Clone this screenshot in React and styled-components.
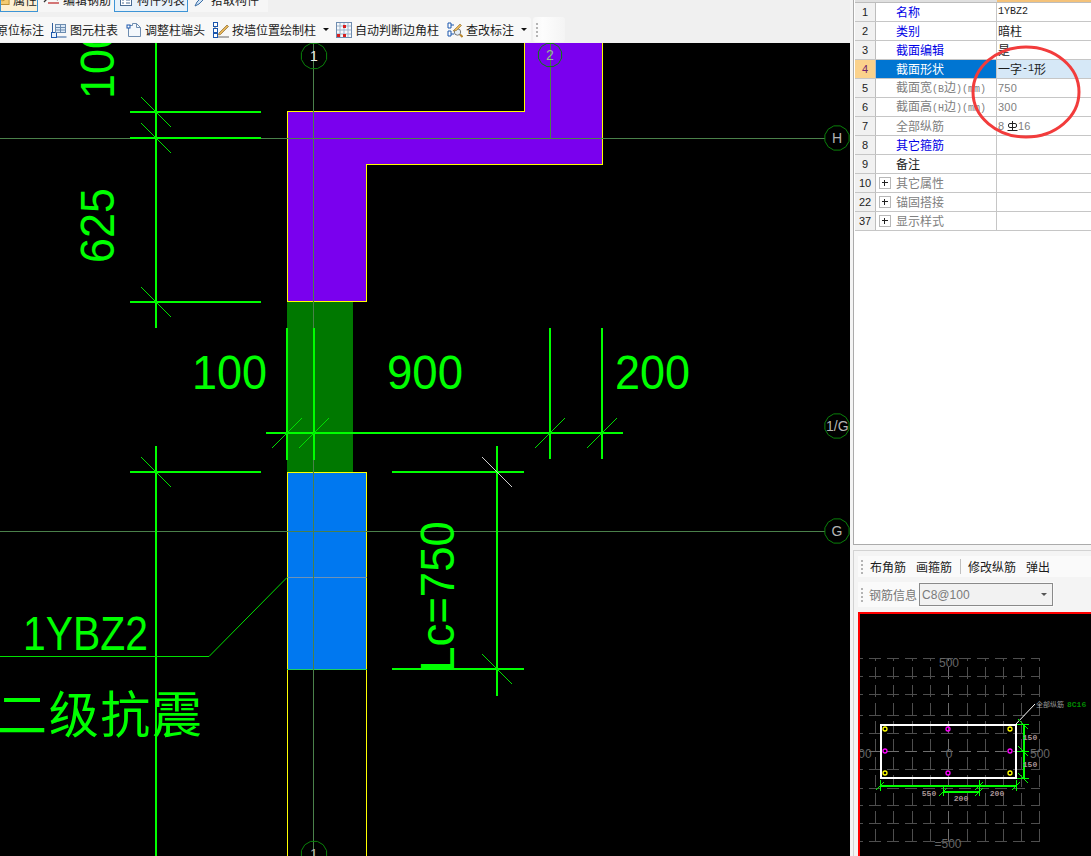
import React from 'react';
import styled, { createGlobalStyle } from 'styled-components';

const UI_FONT = '"Noto Sans CJK SC", "Liberation Sans", sans-serif';
const LATIN_FONT = '"Liberation Mono", "Noto Sans CJK SC", monospace';
const SANS_FONT = '"Liberation Sans", "Noto Sans CJK SC", sans-serif';

const GlobalStyle = createGlobalStyle`
  html, body { margin: 0; padding: 0; background: #f0f0f0; }
  body { font-family: ${UI_FONT}; font-size: 12px; color: #1c1c1c; }
`;

const Page = styled.div`
  display: grid;
  grid-template-columns: 850px 241px;
  width: 1091px;
  height: 856px;
  overflow: hidden;
`;

// Left side
const LeftColumn = styled.div`
  display: flex;
  flex-direction: column;
  min-width: 0;
`;
const TabBar = styled.div`
  display: flex;
  align-items: flex-end;
  flex: none;
  width: 268px;
  height: 12px;
  overflow: hidden;
  background: #f6f6f6;
`;
const TabButton = styled.div`
  display: flex;
  align-items: center;
  flex: none;
  box-sizing: border-box;
  height: 24px;
  width: ${p => p.$w}px;
  margin-right: ${p => p.$gap || 0}px;
  padding-left: ${p => p.$pad || 0}px;
  gap: ${p => p.$iconGap || 3}px;
  line-height: 14px;
  white-space: nowrap;
  border: 1px solid ${p => (p.$active ? '#3d94d6' : 'transparent')};
  background: ${p => p.$fill || 'transparent'};
`;
const ToolRow = styled.div`
  display: flex;
  flex: none;
  gap: 2px;
  height: 25px;
  margin-top: 5px;
  margin-bottom: 1px;
`;
const ToolStrip = styled.div`
  display: flex;
  align-items: center;
  flex: none;
  width: 531px;
  overflow: hidden;
  background: #f8f8f8;
  border-radius: 0 3px 3px 0;
`;
const ToolItem = styled.div`
  display: flex;
  align-items: center;
  flex: none;
  gap: 3px;
  margin-left: ${p => p.$ml}px;
  white-space: nowrap;
  line-height: 14px;
`;
const ToolArrow = styled.span`
  flex: none;
  width: 0;
  height: 0;
  margin-left: 4px;
  border-left: 3px solid transparent;
  border-right: 3px solid transparent;
  border-top: 3px solid #111;
`;
const GripStrip = styled.div`
  display: flex;
  align-items: center;
  flex: none;
  width: 32px;
  padding-left: 3px;
  box-sizing: border-box;
  border-radius: 3px;
  background: linear-gradient(to right, #f7f7f7, #fdfdfd 30%, #f4f4f4);
`;
const Grip = styled.div`
  flex: none;
  width: 2px;
  height: ${p => p.$h || 14}px;
  background: repeating-linear-gradient(to bottom, #b4b4b4 0 2px, transparent 2px 4px);
`;
const CanvasWrap = styled.div`
  flex: 1;
  min-height: 0;
  background: #000;
`;
const CadSvg = styled.svg`
  display: block;
  width: 850px;
  height: 813px;
`;
const DimLine = styled.line`
  stroke: #00ff00;
  stroke-width: 2;
  shape-rendering: crispEdges;
`;
const Slash = styled.line`
  stroke: ${p => p.$c || '#00e000'};
  stroke-width: 1;
`;
const AxisLine = styled.line`
  stroke: #4a804a;
  stroke-width: 1;
  shape-rendering: crispEdges;
`;
const Outline = styled.line`
  stroke: ${p => p.$c || '#ffff00'};
  stroke-width: 1;
  shape-rendering: crispEdges;
`;
const CadText = styled.text`
  fill: #00ff00;
  font-family: "Liberation Sans", sans-serif;
  font-size: 48px;
`;
const CadCjk = styled.text`
  fill: #00ff00;
  font-family: "Noto Sans CJK SC", sans-serif;
  font-weight: 400;
  font-size: 50px;
`;
const BubbleShape = styled.polygon`
  fill: none;
  stroke: #0a800a;
  stroke-width: 1;
`;
const BubbleText = styled.text`
  fill: ${p => p.$c || '#b4b4b4'};
  font-family: "Liberation Sans", sans-serif;
  font-size: ${p => p.$s || 14}px;
  text-anchor: ${p => p.$a || 'middle'};
`;

// Right side
const RightColumn = styled.div`
  display: flex;
  flex-direction: column;
  padding-left: 3px;
  min-width: 0;
  background: #f4f4f4;
`;
const PropertyPanel = styled.div`
  position: relative;
  flex: none;
  box-sizing: border-box;
  height: 545px;
  padding: 0 0 0 1px;
  background: #fff;
  border-left: 1px solid #ababab;
  border-bottom: 1px solid #ababab;
`;
const HeaderRow = styled.div`
  display: grid;
  grid-template-columns: 21px 121px 1fr;
  height: 2px;
  background: #e0e0e0;
  border-bottom: 1px solid #bdbdbd;
`;
const HeaderCell = styled.div`
  background: ${p => (p.$on ? '#f4c27a' : 'transparent')};
`;
const PropRow = styled.div`
  display: grid;
  grid-template-columns: 21px 121px 1fr;
  box-sizing: border-box;
  height: 19px;
  border-bottom: 1px solid #c6c6c6;
`;
const NumCell = styled.div`
  display: flex;
  align-items: center;
  justify-content: center;
  font-family: ${SANS_FONT};
  font-size: 11px;
  border-right: 1px solid #bdbdbd;
  background: ${p => (p.$sel ? '#fbd28c' : '#f1f1f1')};
  color: ${p => (p.$sel ? '#70256e' : '#222')};
`;
const NameCell = styled.div`
  display: flex;
  align-items: center;
  padding-left: ${p => (p.$group ? 3 : 20)}px;
  gap: 5px;
  line-height: 14px;
  white-space: nowrap;
  overflow: hidden;
  border-right: 1px solid #c6c6c6;
  background: ${p => (p.$sel ? '#0075d2' : '#fff')};
  color: ${p => (p.$sel ? '#fff' : p.$tone)};
`;
const ValueCell = styled.div`
  display: flex;
  align-items: center;
  padding-left: 1px;
  line-height: 14px;
  white-space: nowrap;
  overflow: hidden;
  background: ${p => (p.$sel ? '#d6e8f7' : '#fff')};
  color: ${p => p.$tone || '#1c1c1c'};
`;
const Latin = styled.span`
  font-family: ${LATIN_FONT};
  font-size: 10px;
`;
const Digits = styled.span`
  font-family: ${SANS_FONT};
  font-size: 11px;
  letter-spacing: 0.2px;
`;
const PlusBox = styled.span`
  position: relative;
  flex: none;
  box-sizing: border-box;
  width: 12px;
  height: 12px;
  border: 1px solid #b8b8b8;
  background: #fff;
  &::before, &::after {
    content: '';
    position: absolute;
    background: #222;
  }
  &::before { left: 2px; right: 2px; top: 4px; height: 1px; }
  &::after { top: 2px; bottom: 2px; left: 4px; width: 1px; }
`;
const RedCircle = styled.svg`
  position: absolute;
  left: 115px;
  top: 42px;
  width: 114px;
  height: 100px;
  overflow: visible;
  pointer-events: none;
`;
const LowerPanel = styled.div`
  display: flex;
  flex-direction: column;
  flex: 1;
  min-height: 0;
  margin-top: 5px;
  padding: 5px 0 0 4px;
  background: #f4f4f4;
  border-left: 1px solid #d2d2d2;
  border-top: 1px solid #d2d2d2;
`;
const MiniBar = styled.div`
  display: flex;
  align-items: center;
  flex: none;
  box-sizing: border-box;
  height: ${p => p.$h}px;
  width: ${p => p.$w}px;
  margin-bottom: ${p => p.$mb}px;
  padding-left: 3px;
  background: #fafafa;
`;
const MiniLabel = styled.span`
  margin-left: ${p => p.$ml}px;
  line-height: 14px;
  white-space: nowrap;
  color: ${p => p.$c || '#1c1c1c'};
`;
const MiniDivider = styled.span`
  width: 1px;
  height: 15px;
  margin-left: 8px;
  background: #c0c0c0;
`;
const ComboBox = styled.div`
  display: flex;
  align-items: center;
  justify-content: space-between;
  box-sizing: border-box;
  width: 134px;
  height: 23px;
  margin-left: 2px;
  padding: 0 5px 0 2px;
  font-family: "Liberation Sans", sans-serif;
  font-size: 12px;
  color: #7a7a7a;
  background: #f2f2f2;
  border: 1px solid #8a8a8a;
`;
const ComboArrow = styled.span`
  width: 0;
  height: 0;
  border-left: 3px solid transparent;
  border-right: 3px solid transparent;
  border-top: 3px solid #555;
`;
const Preview = styled.div`
  flex: 1;
  min-height: 0;
  background: #000;
  border-top: 2px solid #ff0000;
  border-left: 2px solid #ff0000;
`;
const PreviewSvg = styled.svg`
  display: block;
  width: 231px;
  height: 243px;
`;
const GridLine = styled.line`
  stroke: ${p => p.$c || '#4e4e4e'};
  stroke-width: 1;
  stroke-dasharray: 12 6;
  stroke-dashoffset: 9;
  shape-rendering: crispEdges;
`;
const SectionEdge = styled.line`
  stroke: ${p => p.$c || '#fff'};
  stroke-width: ${p => p.$w || 1};
  shape-rendering: ${p => (p.$smooth ? 'auto' : 'crispEdges')};
`;
const RebarDot = styled.circle`
  fill: none;
  stroke: ${p => p.$c};
  stroke-width: 1.3;
`;
const PreviewText = styled.text`
  fill: ${p => p.$c || '#666'};
  font-family: "Liberation Sans", sans-serif;
  font-size: ${p => p.$s || 12}px;
  text-anchor: ${p => p.$a || 'middle'};
`;
const PreviewSmall = styled.text`
  fill: ${p => p.$c || '#a89494'};
  font-family: ${p => (p.$cjk ? UI_FONT : LATIN_FONT)};
  font-size: ${p => p.$s || 8}px;
  font-weight: ${p => (p.$cjk ? 400 : 700)};
  text-anchor: ${p => p.$a || 'middle'};
`;

// Toolbar icons
const MailIcon = () => (
  <svg width="10" height="12" viewBox="0 0 10 12">
    <rect x="-4" y="2" width="13" height="9" fill="#f3cb72" stroke="#b98a2c" />
    <path d="M-4 3l6 4 7-4" fill="none" stroke="#b98a2c" />
  </svg>
);
const RebarIcon = () => (
  <svg width="17" height="12" viewBox="0 0 17 12">
    <path d="M1 8l4-4h6l4 2" fill="none" stroke="#333" strokeWidth="1.3" />
    <path d="M5 9h11" stroke="#c03030" strokeWidth="1.3" />
  </svg>
);
const ListIcon = () => (
  <svg width="12" height="14" viewBox="0 0 12 14">
    <rect x="0.5" y="1.5" width="11" height="11" fill="#fff" stroke="#4a6c94" />
    <path d="M2 4h2M6 4h4M2 7h2M6 7h4M2 10h2M6 10h4" stroke="#4a6c94" />
  </svg>
);
const PickIcon = () => (
  <svg width="14" height="14" viewBox="0 0 14 14">
    <path d="M1 13l2-4 7-7 2 2-7 7z" fill="#cfe2f5" stroke="#3c6ea5" />
  </svg>
);
const TableIcon = () => (
  <svg width="16" height="16" viewBox="0 0 16 16">
    <path d="M1.5 1v14h14" fill="none" stroke="#2f5f9e" />
    <rect x="0.5" y="10.5" width="5" height="5" fill="#e8f1fb" stroke="#1b56ad" />
    <rect x="4.5" y="2.5" width="10" height="8" fill="#dce9f7" stroke="#6c8cb0" />
    <path d="M5 5.5h9M5 8h9M9.500 3v7" stroke="#6c8cb0" />
  </svg>
);
const PageIcon = () => (
  <svg width="16" height="16" viewBox="0 0 16 16">
    <path d="M2.500 3.500h4v-2h4l4 4v9h-12z" fill="#f4f8fc" stroke="#6f8db0" />
    <path d="M10.500 1.500v4h4" fill="none" stroke="#6f8db0" />
    <rect x="1" y="3" width="3" height="3" fill="#fff" stroke="#1b56ad" />
  </svg>
);
const WallPencilIcon = () => (
  <svg width="16" height="16" viewBox="0 0 16 16">
    <path d="M2 1v14h14" fill="none" stroke="#666" />
    <rect x="0.5" y="0.5" width="4" height="4" fill="#fff" stroke="#1b56ad" />
    <rect x="0.5" y="6.5" width="4" height="4" fill="#fff" stroke="#1b56ad" />
    <rect x="0.500" y="11.5" width="4" height="4" fill="#fff" stroke="#1b56ad" />
    <path d="M6 11l8-8 1.500 1.500-8 8-2 .5z" fill="#e7b65a" stroke="#8b6a2c" strokeWidth="0.7" />
  </svg>
);
const GridDotsIcon = () => (
  <svg width="16" height="16" viewBox="0 0 16 16">
    <rect x="0.5" y="0.5" width="15" height="15" fill="#f6f9fc" stroke="#6f8db0" />
    <path d="M4 1v14M8 1v14M12 1v14M1 4h14M1 8h14M1 12h14" stroke="#9db3ca" />
    <rect x="7" y="3" width="3" height="3" fill="#d81e1e" />
    <rect x="1" y="12" width="3" height="3" fill="#d81e1e" />
    <rect x="7" y="12" width="3" height="3" fill="#d81e1e" />
  </svg>
);
const MarkFixIcon = () => (
  <svg width="16" height="16" viewBox="0 0 16 16">
    <path d="M1 1h3v5H1zM1 9h3v5H1zM4 3h3M4 12h3" fill="#fff" stroke="#1b56ad" />
    <circle cx="10.500" cy="10" r="3.200" fill="#e4eef8" stroke="#777" />
    <path d="M13 12.500l2.500 2.500" stroke="#b9852c" strokeWidth="2" />
    <path d="M6 9l7-7 1.500 1.500-5 5z" fill="#e7b65a" stroke="#8b6a2c" strokeWidth="0.6" />
  </svg>
);
const RebarGlyph = () => (
  <svg width="11" height="11" viewBox="0 0 11 11">
    <rect x="1.500" y="2.500" width="8" height="4" rx="1.500" fill="none" stroke="#222" />
    <path d="M5.500 0v10M0.500 9.500h10" stroke="#222" />
  </svg>
);

// Axis bubbles are drawn as the CAD program draws its circles, a 12 sided polygon
const bubblePoints = (cx, cy, r) =>
  Array.from({ length: 12 }, (_, i) => {
    const a = (i * Math.PI) / 6 + Math.PI / 12;
    return `${(cx + r * Math.cos(a)).toFixed(1)},${(cy + r * Math.sin(a)).toFixed(1)}`;
  }).join(' ');

const Bubble = ({ x, y, r = 12.5, label, color, textX, anchor }) => (
  <>
    <BubbleShape points={bubblePoints(x, y, r)} />
    <BubbleText x={textX || x} y={y + 5} $c={color} $a={anchor}>{label}</BubbleText>
  </>
);

// tick: a short thin slash across a dimension point, dir 1 goes "\" and -1 goes "/"
const Tick = ({ x, y, dir = 1, color }) => (
  <Slash x1={x - 15} y1={y - 15 * dir} x2={x + 15} y2={y + 15 * dir} $c={color} />
);

const CadDrawing = () => (
  <CadSvg viewBox="0 43 850 813">
    <polygon points="287,111 524,111 524,43 602,43 602,164 366,164 366,301 287,301" fill="#7a00ee" />
    <rect x="287" y="302" width="66" height="170" fill="#007800" />
    <rect x="287" y="472" width="79" height="197" fill="#0078f0" />

    <Outline x1="287.500" y1="111" x2="287.500" y2="301" />
    <Outline x1="287" y1="111.500" x2="524" y2="111.500" />
    <Outline x1="524.500" y1="43" x2="524.500" y2="112" />
    <Outline x1="602.500" y1="43" x2="602.500" y2="165" />
    <Outline x1="366" y1="164.500" x2="603" y2="164.500" />
    <Outline x1="366.500" y1="164" x2="366.500" y2="301" />
    <Outline x1="287" y1="301.500" x2="367" y2="301.500" />
    <Outline x1="287" y1="472.500" x2="367" y2="472.500" />
    <Outline x1="287.500" y1="472" x2="287.500" y2="856" />
    <Outline x1="366.500" y1="472" x2="366.500" y2="856" />
    <Outline x1="287" y1="669.500" x2="367" y2="669.500" $c="#20d060" />
    <Outline x1="287" y1="577.500" x2="367" y2="577.500" $c="#6f93b5" />

    <AxisLine x1="0" y1="138.500" x2="825" y2="138.500" />
    <AxisLine x1="0" y1="531.500" x2="825" y2="531.500" />
    <AxisLine x1="313.500" y1="43" x2="313.500" y2="856" />
    <AxisLine x1="550.500" y1="43" x2="550.500" y2="138" />

    <DimLine x1="156" y1="43" x2="156" y2="328" />
    <DimLine x1="130" y1="112" x2="261" y2="112" />
    <DimLine x1="130" y1="138" x2="261" y2="138" />
    <DimLine x1="130" y1="302" x2="261" y2="302" />
    <Tick x={156} y={112} />
    <Tick x={156} y={138} />
    <Tick x={156} y={302} />

    <DimLine x1="287" y1="328" x2="287" y2="460" />
    <DimLine x1="314" y1="328" x2="314" y2="460" />
    <DimLine x1="550" y1="328" x2="550" y2="459" />
    <DimLine x1="602" y1="328" x2="602" y2="459" />
    <DimLine x1="266" y1="433" x2="623" y2="433" />
    <Tick x={287} y={433} dir={-1} />
    <Tick x={314} y={433} dir={-1} />
    <Tick x={550} y={433} dir={-1} />
    <Tick x={602} y={433} dir={-1} />

    <DimLine x1="156" y1="446" x2="156" y2="856" />
    <DimLine x1="130" y1="472" x2="261" y2="472" />
    <Tick x={156} y={472} />

    <DimLine x1="497" y1="446" x2="497" y2="696" />
    <DimLine x1="392" y1="472" x2="524" y2="472" />
    <DimLine x1="392" y1="669" x2="524" y2="669" />
    <Tick x={497} y={472} color="#d0d0d0" />
    <Tick x={497} y={669} />

    <Slash x1="0" y1="656.500" x2="209" y2="656.500" />
    <Slash x1="209" y1="656.500" x2="287" y2="577.500" />

    <CadText x="192" y="389" textLength="75" lengthAdjust="spacingAndGlyphs">100</CadText>
    <CadText x="387" y="389" textLength="76" lengthAdjust="spacingAndGlyphs">900</CadText>
    <CadText x="615" y="389" textLength="75" lengthAdjust="spacingAndGlyphs">200</CadText>
    <CadText transform="translate(114 263) rotate(-90)" textLength="75" lengthAdjust="spacingAndGlyphs">625</CadText>
    <CadText transform="translate(114 99) rotate(-90)" textLength="75" lengthAdjust="spacingAndGlyphs">100</CadText>
    <CadText transform="translate(454 672) rotate(-90)" textLength="151" lengthAdjust="spacingAndGlyphs">Lc=750</CadText>
    <CadText x="23" y="650" textLength="125" lengthAdjust="spacingAndGlyphs">1YBZ2</CadText>
    <CadCjk x="-3" y="733" textLength="205" lengthAdjust="spacing">二级抗震</CadCjk>

    <Bubble x={314} y={56} r={13} label="1" color="#e8e8e8" />
    <Bubble x={550} y={55} r={12} label="2" color="#9ab59a" />
    <Bubble x={837} y={138} label="H" />
    <Bubble x={837} y={426} label="1/G" textX={826} anchor="start" />
    <Bubble x={837} y={531} label="G" />
    <Bubble x={314} y={854} r={13} label="1" />
  </CadSvg>
);

const BLUE = '#0000e6';
const GREY = '#808080';
const BLACK = '#1c1c1c';

const PROPS = [
  { n: 1, name: '名称', tone: BLUE, value: <Latin>1YBZ2</Latin> },
  { n: 2, name: '类别', tone: BLUE, value: '暗柱' },
  { n: 3, name: '截面编辑', tone: BLUE, value: '是' },
  { n: 4, name: '截面形状', tone: BLUE, value: <>一字<Latin>-1</Latin>形</>, sel: true },
  { n: 5, name: <>截面宽<Latin>(B</Latin>边<Latin>)(mm)</Latin></>, tone: GREY, value: <Digits>750</Digits>, valueTone: GREY },
  { n: 6, name: <>截面高<Latin>(H</Latin>边<Latin>)(mm)</Latin></>, tone: GREY, value: <Digits>300</Digits>, valueTone: GREY },
  { n: 7, name: '全部纵筋', tone: GREY, value: <><Digits>8</Digits>&nbsp;<RebarGlyph /><Digits>16</Digits></>, valueTone: GREY },
  { n: 8, name: '其它箍筋', tone: BLUE, value: '' },
  { n: 9, name: '备注', tone: BLACK, value: '' },
  { n: 10, name: '其它属性', tone: GREY, value: '', group: true },
  { n: 22, name: '锚固搭接', tone: GREY, value: '', group: true },
  { n: 37, name: '显示样式', tone: GREY, value: '', group: true },
];

const TOOLS = [
  { ml: -4, label: '原位标注' },
  { ml: 7, icon: <TableIcon />, label: '图元柱表' },
  { ml: 8, icon: <PageIcon />, label: '调整柱端头' },
  { ml: 8, icon: <WallPencilIcon />, label: '按墙位置绘制柱', arrow: true },
  { ml: 7, icon: <GridDotsIcon />, label: '自动判断边角柱' },
  { ml: 8, icon: <MarkFixIcon />, label: '查改标注', arrow: true },
];

const GRID_X = [875, 893, 912, 930, 948, 967, 985, 1003, 1021, 1039];
const GRID_Y = [657, 675, 693, 714, 732, 750, 768, 787, 804, 822, 840];

const SectionPreview = () => (
  <PreviewSvg viewBox="860 613 231 243">
    {GRID_X.map(x => (
      <GridLine key={x} x1={x + 0.5} y1="657" x2={x + 0.5} y2="841" $c={x === 948 ? '#6e6e6e' : undefined} />
    ))}
    {GRID_Y.map(y => (
      <GridLine key={y} x1="860" y1={y + 0.5} x2="1040" y2={y + 0.5} $c={y === 750 ? '#6e6e6e' : undefined} />
    ))}
    <PreviewText x="949" y="666">500</PreviewText>
    <PreviewText x="948" y="847">=500</PreviewText>
    <PreviewText x="1040" y="757">500</PreviewText>
    <PreviewText x="865" y="757">00</PreviewText>
    <PreviewText x="949" y="757">0</PreviewText>

    <SectionEdge x1="881" y1="724" x2="1017" y2="724" $w={2} />
    <SectionEdge x1="881" y1="777" x2="1017" y2="777" $w={2} />
    <SectionEdge x1="881" y1="723" x2="881" y2="778" $w={2} />
    <SectionEdge x1="1016" y1="723" x2="1016" y2="778" $w={2} />
    <SectionEdge x1="1016" y1="723" x2="1035" y2="703" $smooth />

    {[[885, 728], [1010, 728], [885, 772], [1010, 772]].map(([x, y]) => (
      <RebarDot key={`${x}-${y}`} cx={x} cy={y} r="2" $c="#ffff00" />
    ))}
    {[[948, 728], [948, 772], [885, 750], [1010, 750]].map(([x, y]) => (
      <RebarDot key={`${x}-${y}`} cx={x} cy={y} r="2" $c="#ff00ff" />
    ))}

    <SectionEdge x1="880" y1="785" x2="1016" y2="785" $c="#00ff00" $w={2} />
    <SectionEdge x1="943" y1="791" x2="979" y2="791" $c="#00ff00" $w={2} />
    <SectionEdge x1="880.500" y1="779" x2="880.500" y2="790" $c="#00ff00" />
    <SectionEdge x1="979.500" y1="779" x2="979.500" y2="795" $c="#00ff00" />
    <SectionEdge x1="943.500" y1="785" x2="943.500" y2="795" $c="#00ff00" />
    <SectionEdge x1="1016.500" y1="779" x2="1016.500" y2="790" $c="#00ff00" />
    <SectionEdge x1="1023.500" y1="723" x2="1023.500" y2="778" $c="#00ff00" $w={2} />
    <SectionEdge x1="1017" y1="723.500" x2="1029" y2="723.500" $c="#00ff00" />
    <SectionEdge x1="1017" y1="750.500" x2="1029" y2="750.500" $c="#00ff00" />
    <SectionEdge x1="1017" y1="777.500" x2="1029" y2="777.500" $c="#00ff00" />
    {[[880, 785], [979, 785], [1016, 785], [943, 791], [979, 791]].map(([x, y]) => (
      <SectionEdge key={`${x}-${y}`} x1={x - 4} y1={y + 4} x2={x + 4} y2={y - 4} $c="#00ff00" $smooth />
    ))}
    {[[1023, 723], [1023, 750], [1023, 777]].map(([x, y]) => (
      <SectionEdge key={`${x}-${y}`} x1={x - 5} y1={y - 5} x2={x + 5} y2={y + 5} $c="#00ff00" $smooth />
    ))}

    <PreviewSmall x="929" y="795">550</PreviewSmall>
    <PreviewSmall x="961" y="800">200</PreviewSmall>
    <PreviewSmall x="997" y="795">200</PreviewSmall>
    <PreviewSmall x="1030" y="739">150</PreviewSmall>
    <PreviewSmall x="1030" y="766">150</PreviewSmall>
    <PreviewSmall x="1036" y="706" $a="start" $cjk $c="#9a9a9a" $s={7}>全部纵筋</PreviewSmall>
    <PreviewSmall x="1067" y="706" $a="start" $c="#008a00">8C16</PreviewSmall>
  </PreviewSvg>
);

export default function App() {
  return (
    <Page>
      <GlobalStyle />
      <LeftColumn>
        <TabBar>
          <TabButton $w={38} $gap={4} $active $iconGap={3} $fill="#fdf0d4">
            <MailIcon />属性
          </TabButton>
          <TabButton $w={70} $gap={2}>
            <RebarIcon />编辑钢筋
          </TabButton>
          <TabButton $w={74} $gap={5} $active $pad={5} $iconGap={5} $fill="#e8f2fa">
            <ListIcon />构件列表
          </TabButton>
          <TabButton $w={68}>
            <PickIcon />拾取构件
          </TabButton>
        </TabBar>
        <ToolRow>
          <ToolStrip>
            {TOOLS.map(t => (
              <ToolItem key={t.label} $ml={t.ml}>
                {t.icon}
                {t.label}
                {t.arrow && <ToolArrow />}
              </ToolItem>
            ))}
          </ToolStrip>
          <GripStrip><Grip /></GripStrip>
        </ToolRow>
        <CanvasWrap>
          <CadDrawing />
        </CanvasWrap>
      </LeftColumn>

      <RightColumn>
        <PropertyPanel>
          <HeaderRow>
            <HeaderCell />
            <HeaderCell />
            <HeaderCell $on />
          </HeaderRow>
          {PROPS.map(p => (
            <PropRow key={p.n}>
              <NumCell $sel={p.sel}>{p.n}</NumCell>
              <NameCell $sel={p.sel} $tone={p.tone} $group={p.group}>
                {p.group && <PlusBox />}
                <span>{p.name}</span>
              </NameCell>
              <ValueCell $sel={p.sel} $tone={p.valueTone}>{p.value}</ValueCell>
            </PropRow>
          ))}
          <RedCircle viewBox="0 0 114 100">
            <ellipse cx="57" cy="50" rx="53" ry="45" fill="none" stroke="#f23c3c" strokeWidth="3" />
          </RedCircle>
        </PropertyPanel>
        <LowerPanel>
          <MiniBar $w={233} $h={21} $mb={5}>
            <Grip />
            <MiniLabel $ml={7}>布角筋</MiniLabel>
            <MiniLabel $ml={10}>画箍筋</MiniLabel>
            <MiniDivider />
            <MiniLabel $ml={7}>修改纵筋</MiniLabel>
            <MiniLabel $ml={10}>弹出</MiniLabel>
          </MiniBar>
          <MiniBar $w={196} $h={25} $mb={5}>
            <Grip />
            <MiniLabel $ml={6} $c="#777">钢筋信息</MiniLabel>
            <ComboBox>
              C8@100
              <ComboArrow />
            </ComboBox>
          </MiniBar>
          <Preview>
            <SectionPreview />
          </Preview>
        </LowerPanel>
      </RightColumn>
    </Page>
  );
}
